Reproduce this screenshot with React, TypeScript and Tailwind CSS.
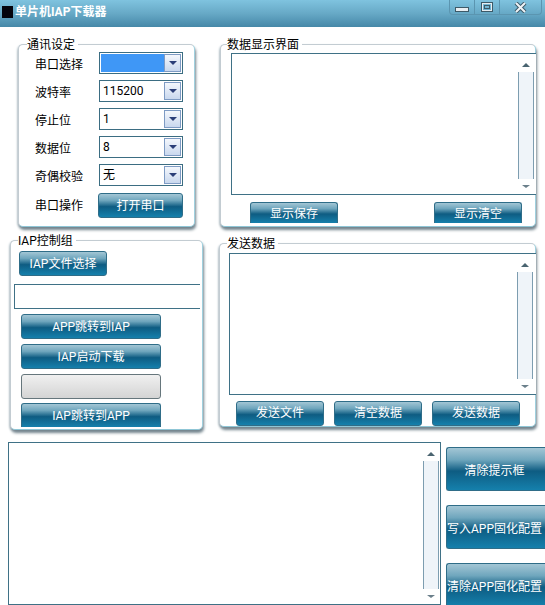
import React from "react";

const FONT = "font-['Roboto','Noto_Sans_CJK_SC',sans-serif]";
const BTN =
  "flex items-center justify-center whitespace-nowrap text-white text-[12px] leading-none border border-[#2f6d88] bg-[linear-gradient(180deg,#a3c6d5_0%,#6fa6bd_28%,#0e5c82_55%,#1580ac_100%)]";

function Btn({ label, className }: { label: string; className: string }) {
  return <div className={`${BTN} ${className}`}>{label}</div>;
}

function Group({ label, className, labelClass, children }: { label: string; className: string; labelClass: string; children: React.ReactNode }) {
  return (
    <div className={`relative rounded-[5px] border border-[#c3ccd2] border-r-[#9fd0de] border-b-[#8fc6d6] bg-white shadow-[1px_3px_3px_#74858e,-1px_1px_2px_#c8d2d8] ${className}`}>
      <span className={`absolute top-[-8px] bg-white pr-[3px] text-[12px] leading-[16px] text-black ${labelClass}`}>{label}</span>
      {children}
    </div>
  );
}

function Scroll({ className }: { className: string }) {
  return (
    <div className={`flex flex-col items-center ${className}`}>
      <div className="mt-[9px] h-0 w-0 border-x-[4px] border-b-[4px] border-x-transparent border-b-[#4a6470]" />
      <div className="mt-[5px] w-full flex-1 border-x border-[#7d9db0] bg-[#eff4f9]" />
      <div className="mb-[6px] mt-[6px] h-0 w-0 border-x-[4px] border-t-[3px] border-x-transparent border-t-[#6a7f8a]" />
    </div>
  );
}

function TextBox({ className, scroll }: { className: string; scroll: string }) {
  return (
    <div className={`flex justify-end border border-[#3f7186] bg-white ${className}`}>
      <Scroll className={scroll} />
    </div>
  );
}

function Combo({ value, selected }: { value?: string; selected?: boolean }) {
  return (
    <div className="flex h-[22px] w-[84px] items-center border border-[#3b6d82] p-[1px] text-[12px] text-black">
      {selected ? (
        <div className="h-full flex-1 bg-[#3f97f6]" />
      ) : (
        <div className="flex-1 pl-[2px] leading-none">{value}</div>
      )}
      <div className="flex h-[18px] w-[17px] items-center justify-center border border-[#7e9bc4] bg-[linear-gradient(180deg,#f4f7fc,#c9d8ee)]">
        <div className="h-0 w-0 border-x-[4px] border-t-[4px] border-x-transparent border-t-[#2b3f78]" />
      </div>
    </div>
  );
}

const rows: [string, string | undefined, boolean][] = [
  ["串口选择", undefined, true],
  ["波特率", "115200", false],
  ["停止位", "1", false],
  ["数据位", "8", false],
  ["奇偶校验", "无", false],
];

export default function App() {
  return (
    <div className={`flex h-[605px] w-[545px] flex-col overflow-hidden bg-white ${FONT}`}>
      <header className="flex h-[27px] shrink-0 items-start justify-between bg-[linear-gradient(180deg,#7fc3df_0%,#67a9c6_50%,#4688a8_100%)]">
        <div className="flex items-center pl-[2px] pt-[4px]">
          <div className="h-[12px] w-[11px] bg-[#04040c]" />
          <span className="ml-[2px] text-[12px] font-bold leading-[16px] text-white">单片机IAP下载器</span>
        </div>
        <div className="mr-[3px] flex h-[15px] w-[93px] rounded-b-[4px] border border-t-0 border-[#5b95b0]">
          <div className="flex w-[25px] items-end justify-center border-r border-[#5b95b0] pb-[2px]">
            <svg width="14" height="5" viewBox="0 0 14 5"><rect x="0.5" y="0.5" width="13" height="4" fill="#e8eef2" stroke="#3d5a68" /></svg>
          </div>
          <div className="flex w-[25px] items-center justify-center border-r border-[#5b95b0]">
            <svg width="12" height="10" viewBox="0 0 12 10"><rect x="1" y="1" width="10" height="8" fill="none" stroke="#e8eef2" strokeWidth="2" /><rect x="0.5" y="0.5" width="11" height="9" fill="none" stroke="#3d5a68" /><rect x="3.5" y="3.5" width="5" height="3" fill="none" stroke="#3d5a68" /></svg>
          </div>
          <div className="flex flex-1 items-center justify-center">
            <svg width="13" height="11" viewBox="0 0 13 11"><path d="M2 1 L11 10 M11 1 L2 10" stroke="#3d5a68" strokeWidth="4" /><path d="M2 1 L11 10 M11 1 L2 10" stroke="#eef3f6" strokeWidth="2" /></svg>
          </div>
        </div>
      </header>

      <div className="ml-[10px] flex h-[403px] shrink-0">
        <div className="flex w-[193px] flex-col">
          <Group label="通讯设定" labelClass="left-[8px]" className="ml-[8px] mt-[17px] h-[183px] w-[177px] shrink-0">
            <div className="flex flex-col gap-[6px] pl-[16px] pt-[7px]">
              {rows.map(([label, value, selected]) => (
                <div key={label} className="flex items-center">
                  <span className="w-[64px] pt-[4px] text-[12px] leading-none text-black">{label}</span>
                  <Combo value={value} selected={selected} />
                </div>
              ))}
              <div className="mt-[1px] flex items-center">
                <span className="w-[63px] text-[12px] leading-none text-black">串口操作</span>
                <Btn label="打开串口" className="h-[25px] w-[85px] rounded-[3px]" />
              </div>
            </div>
          </Group>
          <Group label="IAP控制组" labelClass="left-[7px]" className="mt-[13px] h-[190px] w-[193px] shrink-0">
            <div className="flex flex-col">
              <Btn label="IAP文件选择" className="ml-[8px] mt-[10px] h-[25px] w-[88px] rounded-[3px]" />
              <div className="ml-[3px] mt-[8px] h-[25px] w-[186px] border border-r-0 border-[#3f7186] bg-white" />
              <Btn label="APP跳转到IAP" className="ml-[10px] mt-[5px] h-[25px] w-[140px] rounded-[3px]" />
              <Btn label="IAP启动下载" className="ml-[10px] mt-[5px] h-[25px] w-[140px] rounded-[3px]" />
              <div className="ml-[10px] mt-[5px] h-[25px] w-[140px] rounded-[3px] border border-[#66767c] bg-[linear-gradient(180deg,#f0f0f0,#d4d4d4)]" />
              <Btn label="IAP跳转到APP" className="ml-[10px] mt-[4px] h-[24px] w-[140px] rounded-t-[3px] border-b-0" />
            </div>
          </Group>
        </div>

        <div className="ml-[17px] flex w-[316px] flex-col">
          <Group label="数据显示界面" labelClass="left-[6px]" className="mt-[17px] h-[183px] w-[316px] shrink-0">
            <TextBox className="ml-[10px] mt-[8px] h-[142px] w-[305px] border-r-0" scroll="w-[16px] mr-[2px]" />
            <div className="ml-[29px] mt-[7px] flex w-[272px] justify-between">
              <Btn label="显示保存" className="h-[21px] w-[88px] rounded-t-[3px] border-b-0 pt-[2px]" />
              <Btn label="显示清空" className="h-[21px] w-[88px] rounded-t-[3px] border-b-0 pt-[2px]" />
            </div>
          </Group>
          <Group label="发送数据" labelClass="left-[7px]" className="-ml-[1px] mt-[16px] h-[184px] w-[317px] shrink-0">
            <TextBox className="ml-[9px] mt-[9px] h-[142px] w-[307px] border-r-0" scroll="w-[16px] mr-[3px]" />
            <div className="ml-[16px] mt-[6px] flex gap-[10px]">
              <Btn label="发送文件" className="h-[25px] w-[88px] rounded-[3px] pb-[2px]" />
              <Btn label="清空数据" className="h-[25px] w-[88px] rounded-[3px] pb-[2px]" />
              <Btn label="发送数据" className="h-[25px] w-[88px] rounded-[3px] pb-[2px]" />
            </div>
          </Group>
        </div>
      </div>

      <div className="ml-[8px] mt-[12px] flex">
        <TextBox className="h-[163px] w-[434px]" scroll="w-[16px] mr-[1px]" />
        <div className="ml-[5px] mt-[5px] flex flex-1 flex-col gap-[14px]">
          <Btn label="清除提示框" className="h-[44px] rounded-l-[3px] border-r-0 pr-[3px] pt-[3px]" />
          <Btn label="写入APP固化配置" className="h-[44px] rounded-l-[3px] border-r-0 pr-[3px] pt-[3px]" />
          <Btn label="清除APP固化配置" className="h-[44px] shrink-0 rounded-l-[3px] border-r-0 pr-[3px] pt-[3px]" />
        </div>
      </div>
    </div>
  );
}
